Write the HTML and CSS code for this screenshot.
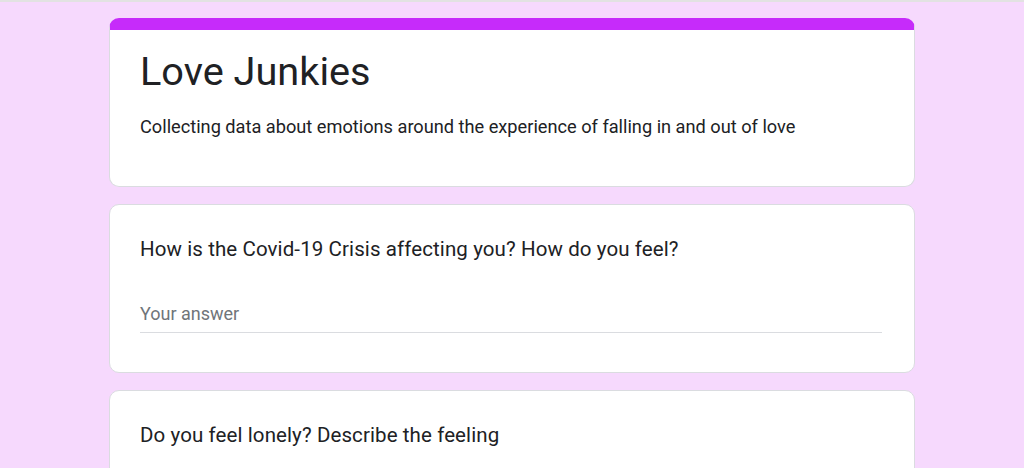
FILE: index.html
```html
<!DOCTYPE html>
<html lang="en">
<head>
<meta charset="utf-8">
<title>Love Junkies</title>
<link rel="stylesheet" href="styles.css">
</head>
<body>
<div class="topline"></div>
<main class="form">
  <section class="card header-card">
    <h1 class="title">Love Junkies</h1>
    <p class="desc">Collecting data about emotions around the experience of falling in and out of love</p>
  </section>
  <section class="card question-card">
    <div class="question">How is the Covid-19 Crisis affecting you? How do you feel?</div>
    <div class="answer">Your answer</div>
  </section>
  <section class="card question-card">
    <div class="question">Do you feel lonely? Describe the feeling</div>
  </section>
</main>
</body>
</html>
```
FILE: styles.css
```css
html, body {
  margin: 0;
  padding: 0;
}
body {
  background: #f6d9fd;
  font-family: Roboto, "Liberation Sans", Arial, sans-serif;
  color: #202124;
  overflow: hidden;
  height: 468px;
}
.topline {
  height: 2px;
  background: #e2e2e2;
}
.form {
  width: 806px;
  margin: 16px auto 0;
  display: flex;
  flex-direction: column;
  gap: 17px;
}
.card {
  background: #fff;
  border: 1px solid #dadce0;
  border-radius: 10px;
  padding: 0 31px 0 30px;
  box-sizing: border-box;
}
.header-card {
  height: 169px;
  border-top: 12px solid #c62bfa;
  padding-top: 16px;
}
.title {
  margin: 0;
  font-weight: 400;
  font-size: 39.7px;
  line-height: 52px;
  letter-spacing: 0;
}
.desc {
  margin: 17px 0 0;
  font-size: 18.2px;
  line-height: 24px;
  letter-spacing: 0;
}
.question-card {
  height: 169px;
  padding-top: 30px;
}
.question {
  font-size: 20.5px;
  line-height: 28px;
  letter-spacing: 0.1px;
}
.answer {
  margin-top: 39px;
  margin-right: 1px;
  font-size: 18px;
  line-height: 24px;
  color: #70757a;
  padding-bottom: 6px;
  border-bottom: 1px solid #dadce0;
}
```
